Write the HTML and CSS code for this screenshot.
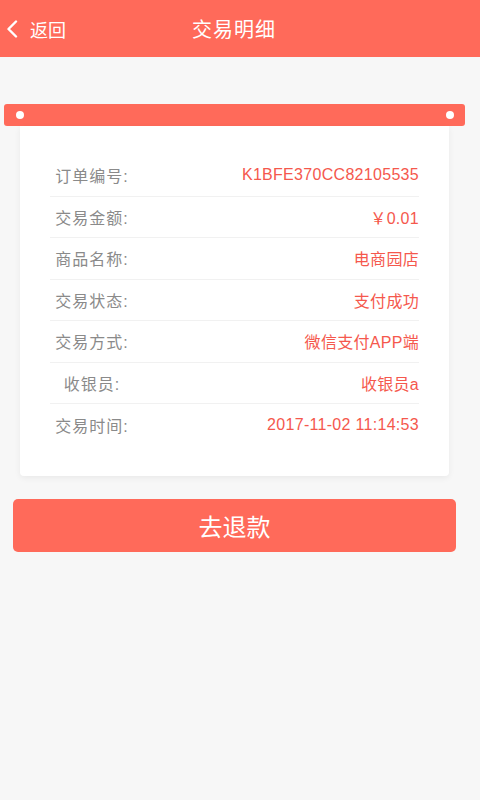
FILE: index.html
```html
<!DOCTYPE html>
<html lang="zh-CN">
<head>
    <meta charset="UTF-8">
    <meta name="viewport" content="width=device-width, initial-scale=1.0">
    <title>交易明细</title>
    <link rel="stylesheet" href="styles.css">
</head>
<body>
    <div class="header">
        <a class="back">
            <svg class="back-icon" width="12" height="18" viewBox="0 0 12 18">
                <path d="M10 1.5 L2.5 9 L10 16.5" fill="none" stroke="#fff" stroke-width="2.4" stroke-linecap="round" stroke-linejoin="round"/>
            </svg>
            <span>返回</span>
        </a>
        <h1>交易明细</h1>
    </div>

    <div class="receipt">
        <div class="receipt-bar">
            <span class="dot"></span>
            <span class="dot"></span>
        </div>
        <div class="receipt-card">
            <div class="row">
                <span class="label">订单编号:</span>
                <span class="value">K1BFE370CC82105535</span>
            </div>
            <div class="row">
                <span class="label">交易金额:</span>
                <span class="value">￥0.01</span>
            </div>
            <div class="row">
                <span class="label">商品名称:</span>
                <span class="value">电商园店</span>
            </div>
            <div class="row">
                <span class="label">交易状态:</span>
                <span class="value">支付成功</span>
            </div>
            <div class="row">
                <span class="label">交易方式:</span>
                <span class="value">微信支付APP端</span>
            </div>
            <div class="row">
                <span class="label">收银员:</span>
                <span class="value">收银员a</span>
            </div>
            <div class="row">
                <span class="label">交易时间:</span>
                <span class="value">2017-11-02 11:14:53</span>
            </div>
        </div>
    </div>

    <div class="actions">
        <button class="refund-btn">去退款</button>
    </div>
</body>
</html>
```

FILE: styles.css
```css
body {
    margin: 0;
    background-color: #f7f7f7;
    font-family: "Liberation Sans", "Noto Sans CJK SC", sans-serif;
    height: 800px;
}
.header {
    position: relative;
    height: 57px;
    padding-right: 12px;
    background-color: #ff6a5a;
    color: white;
    display: flex;
    align-items: center;
    justify-content: center;
}
.header h1 {
    margin: 0;
    font-size: 20px;
    font-weight: normal;
    letter-spacing: 1px;
}
.back {
    position: absolute;
    left: 6px;
    top: 0;
    height: 57px;
    display: flex;
    align-items: center;
    font-size: 18px;
}
.back-icon {
    margin-right: 12px;
}
.receipt {
    padding-top: 47px;
}
.receipt-bar {
    margin: 0 15px 0 4px;
    height: 22px;
    background-color: #ff6a5a;
    border-radius: 3px;
    display: flex;
    align-items: center;
    justify-content: space-between;
    padding: 0 11px 0 12px;
}
.dot {
    width: 8px;
    height: 8px;
    border-radius: 50%;
    background-color: white;
}
.receipt-card {
    margin: 0 31px 0 20px;
    background-color: white;
    box-shadow: 0 2px 6px rgba(0,0,0,0.06);
    border-radius: 0 0 4px 4px;
    padding: 29px 30px 30px 30px;
}
.row {
    box-sizing: border-box;
    display: flex;
    justify-content: space-between;
    align-items: center;
    height: 41.5px;
    border-bottom: 1px solid #f1f1f1;
    font-size: 16px;
}
.row:last-child {
    border-bottom: none;
}
.label {
    width: 76px;
    margin-left: 4px;
    text-align: center;
    color: #8a8a8a;
    letter-spacing: 1px;
    white-space: nowrap;
}
.value {
    color: #f5584d;
    letter-spacing: 0.3px;
    white-space: nowrap;
}
.actions {
    padding: 23px 24px 0 13px;
}
.refund-btn {
    width: 100%;
    height: 53px;
    border: none;
    border-radius: 5px;
    background-color: #ff6a5a;
    color: white;
    font-family: "Noto Sans CJK SC", sans-serif;
    font-size: 24px;
}
```
